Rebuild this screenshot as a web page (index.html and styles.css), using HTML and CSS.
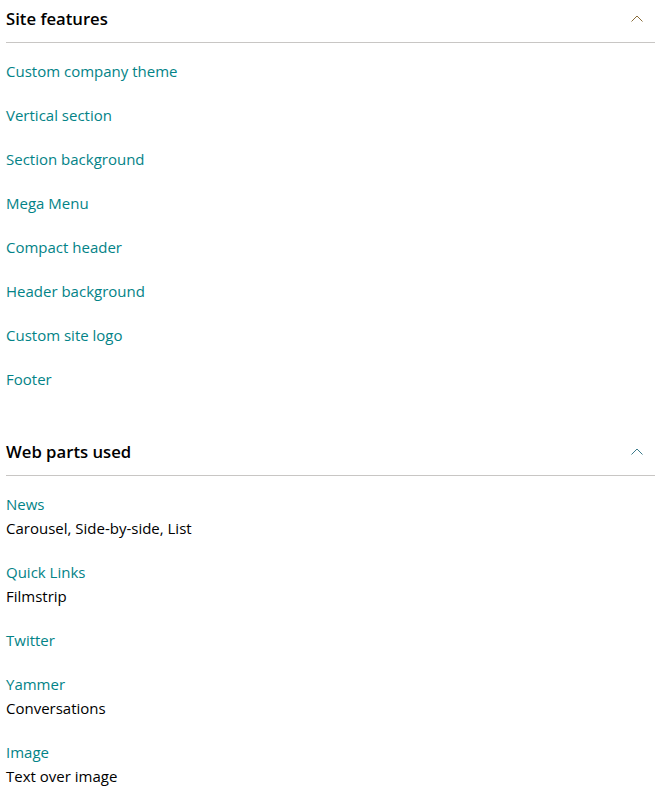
FILE: index.html
```html
<!DOCTYPE html>
<html lang="en">
<head>
<meta charset="utf-8">
<title>Site features</title>
<link rel="stylesheet" href="styles.css">
</head>
<body>
<main class="page">
  <section class="group">
    <header class="group-header">
      <h2 class="group-title">Site features</h2>
      <svg class="chevron" width="12" height="7" viewBox="0 0 12 7" aria-hidden="true"><path d="M0.5 6.5 L6 1 L11.5 6.5" fill="none" stroke="#8a6d3b" stroke-width="1"/></svg>
    </header>
    <ul class="items">
      <li class="item"><a class="link" href="#">Custom company theme</a></li>
      <li class="item"><a class="link" href="#">Vertical section</a></li>
      <li class="item"><a class="link" href="#">Section background</a></li>
      <li class="item"><a class="link" href="#">Mega Menu</a></li>
      <li class="item"><a class="link" href="#">Compact header</a></li>
      <li class="item"><a class="link" href="#">Header background</a></li>
      <li class="item"><a class="link" href="#">Custom site logo</a></li>
      <li class="item"><a class="link" href="#">Footer</a></li>
    </ul>
  </section>
  <section class="group">
    <header class="group-header">
      <h2 class="group-title">Web parts used</h2>
      <svg class="chevron" width="12" height="7" viewBox="0 0 12 7" aria-hidden="true"><path d="M0.5 6.5 L6 1 L11.5 6.5" fill="none" stroke="#3b7a8a" stroke-width="1"/></svg>
    </header>
    <ul class="items">
      <li class="item"><a class="link" href="#">News</a><div class="desc">Carousel, Side-by-side, List</div></li>
      <li class="item"><a class="link" href="#">Quick Links</a><div class="desc">Filmstrip</div></li>
      <li class="item"><a class="link" href="#">Twitter</a></li>
      <li class="item"><a class="link" href="#">Yammer</a><div class="desc">Conversations</div></li>
      <li class="item"><a class="link" href="#">Image</a><div class="desc">Text over image</div></li>
    </ul>
  </section>
</main>
</body>
</html>
```
FILE: styles.css
```css
html, body {
  margin: 0;
  padding: 0;
  background: #ffffff;
}
body {
  font-family: "Open Sans", "Noto Sans", "Liberation Sans", sans-serif;
  color: #000000;
}
.page {
  padding: 7px 14px 0 6px;
  display: flex;
  flex-direction: column;
  gap: 49px;
}
.group-header {
  display: flex;
  align-items: center;
  justify-content: space-between;
  padding-bottom: 11px;
  border-bottom: 1px solid #c8c6c4;
}
.group-title {
  margin: 0;
  font-size: 16.7px;
  font-weight: 600;
  line-height: 24px;
  color: #000;
}
.chevron {
  display: block;
  margin-right: 12px;
  margin-top: -2px;
}
.items {
  list-style: none;
  margin: 0;
  padding: 16px 0 0 0;
  display: flex;
  flex-direction: column;
  gap: 20px;
}
.item {
  font-size: 15px;
  line-height: 24px;
}
.link {
  color: #038387;
  text-decoration: none;
  display: block;
}
.desc {
  color: #000;
}
```
